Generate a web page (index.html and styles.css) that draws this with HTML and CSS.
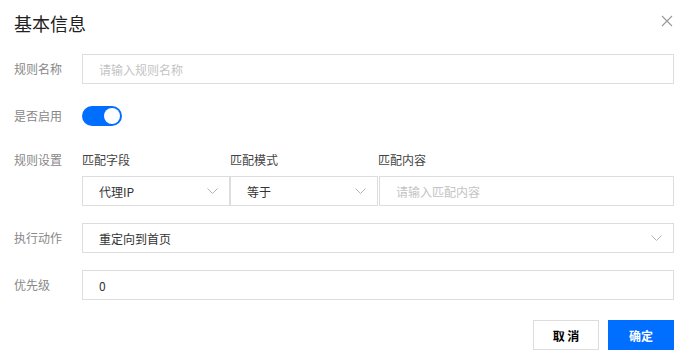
FILE: index.html
```html
<!DOCTYPE html>
<html lang="zh-CN">
<head>
  <meta charset="UTF-8">
  <title>基本信息</title>
  <link rel="stylesheet" href="styles.css">
</head>
<body>

  <div class="dialog">
    <div class="dialog-header">
      <h3>基本信息</h3>
      <button class="close" aria-label="关闭">
        <svg width="12" height="12" viewBox="0 0 12 12"><path d="M1 1L11 11M11 1L1 11" stroke="#999" stroke-width="1.1" fill="none"/></svg>
      </button>
    </div>

    <div class="form-row">
      <label class="form-label">规则名称</label>
      <input class="text-input" type="text" placeholder="请输入规则名称">
    </div>

    <div class="form-row">
      <label class="form-label">是否启用</label>
      <span class="switch on"><span class="knob"></span></span>
    </div>

    <div class="form-row rule-head">
      <label class="form-label">规则设置</label>
      <div class="rule-cols">
        <span class="col-field">匹配字段</span>
        <span class="col-mode">匹配模式</span>
        <span class="col-value">匹配内容</span>
      </div>
    </div>

    <div class="form-row rule-body">
      <span class="form-label"></span>
      <div class="rule-cols">
        <div class="select col-field">
          <span>代理IP</span>
          <svg width="11" height="6" viewBox="0 0 11 6"><path d="M0.5 0.5L5.5 5.5L10.5 0.5" stroke="#b3b3b3" fill="none"/></svg>
        </div>
        <div class="select col-mode">
          <span>等于</span>
          <svg width="11" height="6" viewBox="0 0 11 6"><path d="M0.5 0.5L5.5 5.5L10.5 0.5" stroke="#b3b3b3" fill="none"/></svg>
        </div>
        <input class="text-input col-value" type="text" placeholder="请输入匹配内容">
      </div>
    </div>

    <div class="form-row">
      <label class="form-label">执行动作</label>
      <div class="select wide">
        <span>重定向到首页</span>
        <svg width="11" height="6" viewBox="0 0 11 6"><path d="M0.5 0.5L5.5 5.5L10.5 0.5" stroke="#b3b3b3" fill="none"/></svg>
      </div>
    </div>

    <div class="form-row">
      <label class="form-label">优先级</label>
      <input class="text-input" type="text" value="0">
    </div>

    <div class="dialog-footer">
      <button class="btn">取 消</button>
      <button class="btn primary">确定</button>
    </div>
  </div>

</body>
</html>
```

FILE: styles.css
```css
* {
  box-sizing: border-box;
}
body {
  margin: 0;
  background: #fff;
  font-family: "Noto Sans CJK SC", "Noto Sans", sans-serif;
  font-size: 12px;
  color: #333;
}
.dialog {
  width: 688px;
  height: 363px;
  padding: 0 14px;
}
.dialog-header {
  height: 54px;
  padding-top: 10px;
  display: flex;
  justify-content: space-between;
  align-items: flex-start;
}
.dialog-header h3 {
  margin: 0;
  font-size: 18px;
  font-weight: normal;
  line-height: 26px;
  color: #222;
}
.close {
  border: none;
  background: none;
  padding: 0;
  margin: 5px 1px 0 0;
  width: 12px;
  height: 12px;
  cursor: pointer;
}
.close svg {
  display: block;
}
.form-row {
  display: flex;
  align-items: center;
  height: 30px;
  margin-bottom: 17px;
}
.form-row:nth-of-type(3) {
  margin-bottom: 18px;
}
.form-label {
  flex: 0 0 68px;
  color: #888;
  line-height: 20px;
}
.text-input {
  flex: 1;
  height: 30px;
  border: 1px solid #ddd;
  padding: 0 16px;
  font-family: inherit;
  font-size: 12px;
  color: #333;
  outline: none;
  background: #fff;
}
.text-input::placeholder {
  color: #c4c4c4;
}
.switch {
  width: 40px;
  height: 20px;
  border-radius: 10px;
  background: #e5e5e5;
  position: relative;
}
.switch.on {
  background: #006eff;
}
.knob {
  position: absolute;
  top: 2px;
  left: 2px;
  width: 16px;
  height: 16px;
  border-radius: 50%;
  background: #fff;
}
.switch.on .knob {
  left: 22px;
}
.rule-head {
  height: 22px;
  margin-bottom: 5px;
}
.rule-head .rule-cols {
  color: #444;
  line-height: 22px;
}
.rule-cols {
  flex: 1;
  display: flex;
  align-items: center;
}
.col-field {
  flex: 0 0 148px;
}
.col-mode {
  flex: 0 0 148px;
}
.col-value {
  flex: 1;
}
.rule-body .col-mode {
  margin-right: 1px;
}
.select {
  height: 30px;
  border: 1px solid #ddd;
  padding: 0 11px 0 16px;
  display: flex;
  align-items: center;
  justify-content: space-between;
  color: #333;
  background: #fff;
}
.select svg {
  display: block;
}
.select.wide {
  flex: 1;
}
.dialog-footer {
  display: flex;
  justify-content: flex-end;
  gap: 9px;
  margin-top: 20px;
}
.btn {
  width: 66px;
  height: 30px;
  border: 1px solid #ddd;
  background: #fff;
  color: #000;
  font-family: inherit;
  font-size: 12px;
  font-weight: bold;
  cursor: pointer;
}
.btn.primary {
  background: #006eff;
  border-color: #006eff;
  color: #fff;
}
```
